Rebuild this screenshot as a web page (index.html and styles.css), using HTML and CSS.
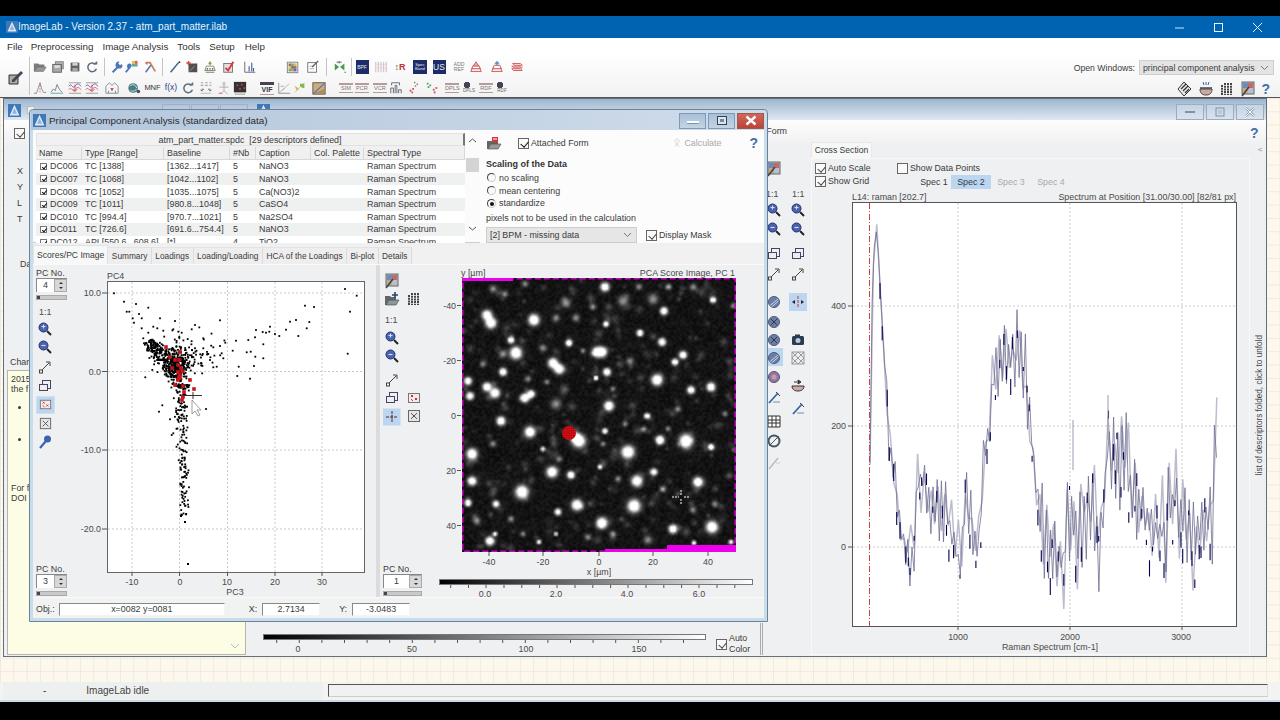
FILE: index.html
```html
<!DOCTYPE html>
<html lang="en">
<head>
<meta charset="utf-8">
<title>ImageLab</title>
<link rel="stylesheet" href="styles.css">
</head>
<body>
<svg class="defs" aria-hidden="true">
  <symbol id="i-logo" viewBox="0 0 16 16"><rect width="16" height="16" fill="#3f78b8"/><path d="M8 1 14 14H2z" fill="#dfeaf5"/><path d="M8 5 11 12H5z" fill="#8fb4da"/></symbol>
  <symbol id="i-folder" viewBox="0 0 16 16"><path d="M1 4h5l1 1h6v3H5l-3 5H1z" fill="#666"/><path d="M5 8h10l-3 5H2z" fill="#888" stroke="#444" stroke-width=".6"/></symbol>
  <symbol id="i-folderadd" viewBox="0 0 16 16"><path d="M1 5h5l1 1h5v3H5l-3 5H1z" fill="#666"/><path d="M5 9h10l-3 5H2z" fill="#899" stroke="#345" stroke-width=".6"/><path d="M11 1v6M8 4h6" stroke="#246" stroke-width="1.6"/></symbol>
  <symbol id="i-folderred" viewBox="0 0 16 16"><path d="M1 6h5l1 1h5v2H5l-3 5H1z" fill="#666"/><path d="M5 9h10l-3 5H2z" fill="#999" stroke="#444" stroke-width=".6"/><rect x="6" y="2" width="6" height="5" fill="#d33"/><path d="M7 4h4" stroke="#fff"/></symbol>
  <symbol id="i-disks" viewBox="0 0 16 16"><rect x="5" y="2" width="9" height="8" fill="#aaa" stroke="#666"/><rect x="2" y="5" width="10" height="9" fill="#999" stroke="#444"/><rect x="4" y="6" width="6" height="3" fill="#ddd"/></symbol>
  <symbol id="i-save" viewBox="0 0 16 16"><rect x="3" y="3" width="10" height="10" fill="#444"/><rect x="5" y="3.5" width="6" height="3" fill="#ccc"/><rect x="5" y="9" width="6" height="4" fill="#999"/></symbol>
  <symbol id="i-refresh" viewBox="0 0 16 16"><path d="M12 5a5 5 0 1 0 1 5" fill="none" stroke="#456" stroke-width="1.7"/><path d="M9 5h5V1z" fill="#456"/></symbol>
  <symbol id="i-wrench" viewBox="0 0 16 16"><path d="M3 14l6-6" stroke="#345fa8" stroke-width="2.2"/><path d="M9 9a3.2 3.2 0 0 1 2-7l-1.5 2 2 2 2-1.5A3.2 3.2 0 0 1 9 9z" fill="#345fa8"/></symbol>
  <symbol id="i-wand" viewBox="0 0 16 16"><path d="M2 14l5-6" stroke="#2e5fb5" stroke-width="2.2"/><path d="M6 10a3 3 0 0 1 1-6l2 2-1 2z" fill="#2e5fb5"/><rect x="9" y="1" width="3.5" height="3.5" fill="#d8b93a"/><rect x="12.5" y="1" width="3" height="3.5" fill="#d44"/><rect x="9" y="4.5" width="3.5" height="3" fill="#4a4"/><rect x="12.5" y="4.5" width="3" height="3" fill="#58c"/></symbol>
  <symbol id="i-xtool" viewBox="0 0 16 16"><path d="M3 3h5l6 10" fill="none" stroke="#c0673a" stroke-width="2"/><path d="M3 14 9 6" stroke="#345fa8" stroke-width="1.8"/><path d="M2 3h3v3z" fill="#c0673a"/></symbol>
  <symbol id="i-pen" viewBox="0 0 16 16"><path d="M3 14 12 3" stroke="#2c4a7a" stroke-width="1.8"/><path d="M12 3l2-1" stroke="#111" stroke-width="1.6"/></symbol>
  <symbol id="i-bbox" viewBox="0 0 16 16"><rect x="4" y="4" width="10" height="10" fill="#333"/><path d="M5 13l6-6" stroke="#888"/><path d="M4 1v5M1.500 3.500h5" stroke="#d22" stroke-width="1.6"/></symbol>
  <symbol id="i-pile" viewBox="0 0 16 16"><path d="M8 1l2 3-2 2-2-2z" fill="#7a8a3a"/><path d="M4 7h8l2 5H2z" fill="#fff" stroke="#4a7a3a"/><circle cx="5" cy="10" r="1" fill="#444"/><circle cx="8" cy="10" r="1" fill="#c33"/><circle cx="11" cy="10" r="1" fill="#444"/><path d="M3 14h10" stroke="#555"/></symbol>
  <symbol id="i-redcheck" viewBox="0 0 16 16"><rect x="2" y="4" width="10" height="10" fill="#ddd" stroke="#555"/><path d="M4 9l3 3 6-10" fill="none" stroke="#d12" stroke-width="2.200"/></symbol>
  <symbol id="i-bars" viewBox="0 0 16 16"><path d="M2 2v12h12" fill="none" stroke="#445"/><path d="M7 13V7M10 13V3M12 13V9" stroke="#2a4a8a" stroke-width="1.300"/></symbol>
  <symbol id="i-mosaic" viewBox="0 0 16 16"><rect x="1.500" y="2.500" width="12" height="12" fill="#eee" stroke="#666"/><path d="M3 4h3v3H3z" fill="#c33"/><path d="M6 4h3v3H6z" fill="#4a4"/><path d="M9 4h3v3H9z" fill="#cb3"/><path d="M3 7h3v3H3z" fill="#cb3"/><path d="M6 7h3v3H6z" fill="#35a"/><path d="M9 7h3v3H9z" fill="#c33"/><path d="M3 10h3v3H3z" fill="#4a4"/><path d="M6 10h3v3H6z" fill="#c73"/><path d="M9 10h3v3H9z" fill="#35a"/></symbol>
  <symbol id="i-checklist" viewBox="0 0 16 16"><rect x="2" y="3" width="10" height="11" fill="#fff" stroke="#555"/><path d="M4 7h5M4 10h5" stroke="#999"/><path d="M7 8l7-7" stroke="#345" stroke-width="1.500"/></symbol>
  <symbol id="i-bowtie" viewBox="0 0 16 16"><path d="M2 4l5 4-5 4zM13 4l-5 4 5 4z" fill="#2f8a2f"/><path d="M7 1v3M4 2.500h6" stroke="#445"/><path d="M13 14h2" stroke="#445"/></symbol>
  <symbol id="i-gridred" viewBox="0 0 16 16"><path d="M2 2v12M5 2v12M8 2v12M11 2v12M14 2v12" stroke="#c9b9c9" stroke-width="1.300"/><path d="M1 5h14M1 9h14" stroke="#dcc" stroke-width=".8"/></symbol>
  <symbol id="i-stack" viewBox="0 0 16 16"><path d="M2 13h12l-2-4H4z" fill="#fff" stroke="#c33" stroke-width="1.100"/><path d="M3 10h10l-2-4H5z" fill="#fff" stroke="#a33" stroke-width="1.100"/><path d="M5 7h6L8 2z" fill="#e9a" stroke="#c33"/></symbol>
  <symbol id="i-stack2" viewBox="0 0 16 16"><path d="M2 13h12l-2-4H4z" fill="#fff" stroke="#c33" stroke-width="1.100"/><path d="M3 10h10l-2-4H5z" fill="#fff" stroke="#a33" stroke-width="1.100"/><path d="M8 1v5M5.500 3.500h5" stroke="#36a" stroke-width="1.300"/></symbol>
  <symbol id="i-stack3" viewBox="0 0 16 16"><path d="M3 4h9l2 2H5zM2 7h10l2 2H4zM2 10h10l2 2H4z" fill="#fbeeee" stroke="#c33" stroke-width="1"/></symbol>
  <symbol id="i-peak" viewBox="0 0 16 16"><path d="M1 14h3l2-6 2-6 2 7 2 4h3" fill="none" stroke="#777"/><path d="M8 2v12" stroke="#c44" stroke-width=".8" stroke-dasharray="2 1"/></symbol>
  <symbol id="i-peak2" viewBox="0 0 16 16"><path d="M1 13l3-4 2 2 2-7 3 6 3 3" fill="none" stroke="#666"/><path d="M1 14h14" stroke="#39a"/></symbol>
  <symbol id="i-wave" viewBox="0 0 16 16"><path d="M1 2h14M1 14h14" stroke="#888"/><path d="M1 6c3-5 4 4 7 0s4-3 7 0" fill="none" stroke="#33a"/><path d="M1 10c3-5 4 4 7 0s4-3 7 0" fill="none" stroke="#c33"/><path d="M8 4v8M5 9l3 3 3-3" fill="none" stroke="#c33"/></symbol>
  <symbol id="i-hist" viewBox="0 0 16 16"><path d="M1 14V6l4-4 3 3 3-3 4 4v8z" fill="none" stroke="#678"/><path d="M6 8h4l-2 4z" fill="#c33"/><path d="M4 14v-3M12 14v-3" stroke="#678"/></symbol>
  <symbol id="i-swirl" viewBox="0 0 16 16"><circle cx="7" cy="8" r="5.500" fill="#2a6a6a"/><path d="M3 6c3-3 7-2 8 2M4 11c2 1 5 1 7-2" fill="none" stroke="#cde" stroke-width="1.100"/><circle cx="13" cy="12" r="2" fill="#234"/></symbol>
  <symbol id="i-gridarrows" viewBox="0 0 16 16"><path d="M2 2h3M7 2h3M12 2h2M2 5h3M7 5h3M12 5h2" stroke="#999" stroke-width="1.300"/><path d="M1 10h5l-2-2v4zM15 10h-5l2-2v4z" fill="#333"/><path d="M2 14h12" stroke="#aaa"/></symbol>
  <symbol id="i-person" viewBox="0 0 16 16"><circle cx="8" cy="3" r="1.500" fill="none" stroke="#999"/><path d="M8 5v6M3 7h10M8 11l-4 4M8 11l4 4" stroke="#999"/><path d="M2 14h4" stroke="#c44"/></symbol>
  <symbol id="i-blackred" viewBox="0 0 16 16"><rect x="1" y="1" width="14" height="12" fill="#111"/><path d="M4 4h2v2H4zM9 3h2v2H9zM7 8h2v2H7zM12 7h2v2h-2z" fill="#c22"/><path d="M2 15h12" stroke="#888"/></symbol>
  <symbol id="i-axisbox" viewBox="0 0 16 16"><path d="M2 2v12h13" fill="none" stroke="#777"/><path d="M2 14 14 3" stroke="#a9a9a9"/><path d="M4 6h4M6 11l3-3" stroke="#999"/></symbol>
  <symbol id="i-arrowpic" viewBox="0 0 16 16"><path d="M2 13 13 2" stroke="#bbb"/><path d="M8 3h5v5h-2L8 6z" fill="#7a3"/><path d="M2 5l5 4-3 2z" fill="#da3"/></symbol>
  <symbol id="i-brownbox" viewBox="0 0 16 16"><rect x="1" y="2" width="14" height="13" fill="#c9a063" stroke="#333"/><path d="M2 14 14 3" stroke="#36a" stroke-width="1.500"/><path d="M3 14 14 9v5z" fill="#a37a3a"/></symbol>
  <symbol id="i-bars2" viewBox="0 0 16 16"><path d="M2 14V8h3v6M7 14V5h2v9M11 14v-4h3v4M3 5V2h9v3" fill="none" stroke="#445"/></symbol>
  <symbol id="i-dots1" viewBox="0 0 16 16"><g fill="#555"><rect x="8" y="1" width="1.500" height="1.500"/><rect x="11" y="3" width="1.500" height="1.500"/><rect x="9" y="5" width="1.500" height="1.500"/></g><g fill="#c33"><rect x="3" y="10" width="2" height="2"/><rect x="6" y="8" width="2" height="2"/><rect x="5" y="12" width="2" height="2"/></g></symbol>
  <symbol id="i-dots2" viewBox="0 0 16 16"><g fill="#2a9a4a"><rect x="2" y="2" width="2" height="2"/><rect x="5" y="4" width="2" height="2"/><rect x="3" y="6" width="2" height="2"/></g><g fill="#c33"><rect x="9" y="9" width="2" height="2"/><rect x="12" y="7" width="2" height="2"/><rect x="10" y="12" width="2" height="2"/></g></symbol>
  <symbol id="i-diamond" viewBox="0 0 16 16"><path d="M7 1l7 7-7 7-6-7z" fill="#eee" stroke="#333"/><path d="M4 8l5-5M6 10l5-5M8 12l4-4" stroke="#333" stroke-width="1.300"/></symbol>
  <symbol id="i-bowl" viewBox="0 0 16 16"><path d="M2 8h12c0 4-2 6-6 6s-6-2-6-6z" fill="#c9a9a0" stroke="#444"/><path d="M2 7h12" stroke="#444" stroke-width="1.500"/><path d="M5 1l1 3M8 1v3M11 1l-1 3" stroke="#36a"/></symbol>
  <symbol id="i-gridcols" viewBox="0 0 16 16"><path d="M3 4v10M6 2v12M9 2v12M12 2v12" stroke="#333" stroke-width="1.800" stroke-dasharray="2 .7"/></symbol>
  <symbol id="i-pal" viewBox="0 0 16 16"><rect x="2" y="1" width="12" height="12" fill="#b9bfcc" stroke="#666"/><path d="M3 2h5v5H3z" fill="#6a8ac0"/><path d="M8 2h5v5H8z" fill="#c66"/><path d="M3 7h5v5H3z" fill="#cca860"/><path d="M2 15 9 6" stroke="#345" stroke-width="1.500"/></symbol>
  <symbol id="i-zin" viewBox="0 0 16 16"><path d="M10 10l4 4" stroke="#222" stroke-width="2"/><circle cx="6.500" cy="6.500" r="4.500" fill="#4a64ac" stroke="#20307a"/><path d="M4.500 5.500h4" stroke="#dde" stroke-width="1.100"/><path d="M6.500 3.500v4" stroke="#dde"/></symbol>
  <symbol id="i-zout" viewBox="0 0 16 16"><path d="M10 10l4 4" stroke="#222" stroke-width="2"/><circle cx="6.500" cy="6.500" r="4.500" fill="#4a64ac" stroke="#20307a"/><path d="M4.500 6.500h4" stroke="#dde" stroke-width="1.100"/></symbol>
  <symbol id="i-expand" viewBox="0 0 16 16"><rect x="2.500" y="11" width="3" height="3" fill="none" stroke="#444"/><path d="M5 11l7-7" stroke="#444"/><path d="M9 3h4v4" fill="none" stroke="#444"/></symbol>
  <symbol id="i-copyrect" viewBox="0 0 16 16"><rect x="5.500" y="2.500" width="8" height="8" fill="none" stroke="#446"/><rect x="2.500" y="6.500" width="8" height="6" fill="#eee" stroke="#446"/></symbol>
  <symbol id="i-boxdots" viewBox="0 0 16 16"><rect x="2.500" y="3.500" width="11" height="9" fill="#f3eaea" stroke="#777"/><path d="M5 5l2 2M7 5 5 7M9 8l2 2M11 8l-2 2M5 9l2 2" stroke="#c33"/></symbol>
  <symbol id="i-boxx" viewBox="0 0 16 16"><rect x="2.500" y="2.500" width="11" height="11" fill="#e6e6e6" stroke="#666"/><path d="M5 5l6 6M11 5l-6 6" stroke="#555"/></symbol>
  <symbol id="i-key" viewBox="0 0 16 16"><path d="M3 14l6-7" stroke="#3a63b0" stroke-width="2.200"/><circle cx="10.500" cy="5" r="3.500" fill="#3a63b0"/></symbol>
  <symbol id="i-cross" viewBox="0 0 16 16"><path d="M8 2v12M2 8h12" stroke="#334" stroke-dasharray="3 1"/><path d="M8 6v4" stroke="#c33"/></symbol>
  <symbol id="i-crossx" viewBox="0 0 16 16"><path d="M8 2v12" stroke="#c33" stroke-dasharray="3 1"/><path d="M2 8l3-2v4zM14 8l-3-2v4z" fill="#223"/></symbol>
  <symbol id="i-target" viewBox="0 0 16 16"><circle cx="8" cy="8" r="5.500" fill="#6a7ea6" stroke="#4a5a80"/><path d="M4 11.500 12 5M5.500 13l7-6" stroke="#c7d4e8"/></symbol>
  <symbol id="i-targetx" viewBox="0 0 16 16"><circle cx="8" cy="8" r="5.500" fill="#6a7ea6" stroke="#4a5a80"/><path d="M5 5l6 6M11 5l-6 6" stroke="#334"/></symbol>
  <symbol id="i-targetr" viewBox="0 0 16 16"><circle cx="8" cy="8" r="5.500" fill="#8a7aa8" stroke="#5a4a78"/><circle cx="8" cy="8" r="2.500" fill="#c99"/></symbol>
  <symbol id="i-cam" viewBox="0 0 16 16"><rect x="2" y="4" width="12" height="9" rx="1.500" fill="#2a3a50"/><rect x="5" y="2.500" width="5" height="2" fill="#2a3a50"/><circle cx="8" cy="8.500" r="2.500" fill="#b9c9d9"/></symbol>
  <symbol id="i-xpal" viewBox="0 0 16 16"><rect x="2" y="2" width="12" height="12" fill="#eee" stroke="#999"/><path d="M2 2l12 12M14 2 2 14M8 2 2 8l6 6 6-6z" fill="none" stroke="#999"/></symbol>
  <symbol id="i-sbowl" viewBox="0 0 16 16"><path d="M2 9h12c0 3-2 5-6 5s-6-2-6-5z" fill="#caa" stroke="#333"/><path d="M4 5h3M8 3l3 2-3 2z" fill="#333" stroke="#333"/></symbol>
  <symbol id="i-tool2" viewBox="0 0 16 16"><path d="M3 14 12 4" stroke="#36a" stroke-width="1.800"/><path d="M7 13h7" stroke="#889"/><path d="M10 3l4 4" stroke="#445"/></symbol>
  <symbol id="i-gridsm" viewBox="0 0 16 16"><path d="M2 3h12v11H2z" fill="#fff" stroke="#333"/><path d="M6 3v11M10 3v11M2 7h12M2 10h12" stroke="#333"/></symbol>
  <symbol id="i-ring" viewBox="0 0 16 16"><circle cx="8" cy="8" r="5.500" fill="none" stroke="#456" stroke-width="2"/><path d="M3 13 13 3" stroke="#456"/></symbol>
  <symbol id="i-fade" viewBox="0 0 16 16"><path d="M3 14 12 3" stroke="#bbb" stroke-width="1.500"/><path d="M10 8h4" stroke="#ccc"/></symbol>
  <symbol id="i-bigedit" viewBox="0 0 16 16"><path d="M1 6h9v9H1z" fill="#aaa" stroke="#333"/><path d="M4 11 13 2l2 2-9 9H4z" fill="#445" /></symbol>
  <symbol id="i-calc" viewBox="0 0 16 16"><path d="M8 1 4 5l4 4-3 5M8 1l4 4-4 4 3 5" fill="none" stroke="#bbb"/></symbol>
</svg>

<div class="screen">
<div class="app">
  <header class="titlebar">
    <svg class="tlogo"><use href="#i-logo"/></svg>
    <span class="ttext">ImageLab - Version 2.37 - atm_part_matter.ilab</span>
    <span class="caps">
      <svg class="capb"><path d="M1 6h9" stroke="#cfe2f3" stroke-width="1"/></svg>
      <svg class="capb"><rect x="1.500" y="1.500" width="8" height="8" fill="none" stroke="#e8f2fa"/></svg>
      <svg class="capb"><path d="M1 1l9 9M10 1l-9 9" stroke="#e8f2fa"/></svg>
    </span>
  </header>
  <nav class="menu"><span>File</span><span>Preprocessing</span><span>Image Analysis</span><span>Tools</span><span>Setup</span><span>Help</span></nav>

  <div class="toolbar">
    <div class="tb-big"><svg class="ic"><use href="#i-bigedit"/></svg></div>
    <i class="tsep tall"></i>
    <div class="tb-rows">
      <div class="tb-row">
        <b class="tool"><svg class="ic"><use href="#i-folder"/></svg></b>
        <b class="tool g4"><svg class="ic"><use href="#i-disks"/></svg></b>
        <b class="tool g3"><svg class="ic"><use href="#i-save"/></svg></b>
        <b class="tool g3"><svg class="ic"><use href="#i-refresh"/></svg></b>
        <i class="tsep g5"></i>
        <b class="tool g5"><svg class="ic"><use href="#i-wrench"/></svg></b>
        <b class="tool"><svg class="ic"><use href="#i-wand"/></svg></b>
        <b class="tool g5"><svg class="ic"><use href="#i-xtool"/></svg></b>
        <i class="tsep g5"></i>
        <b class="tool g5"><svg class="ic"><use href="#i-pen"/></svg></b>
        <b class="tool g3"><svg class="ic"><use href="#i-bbox"/></svg></b>
        <b class="tool g4"><svg class="ic"><use href="#i-pile"/></svg></b>
        <b class="tool g5"><svg class="ic"><use href="#i-redcheck"/></svg></b>
        <b class="tool g7"><svg class="ic"><use href="#i-bars"/></svg></b>
        <b class="tool g29"><svg class="ic"><use href="#i-mosaic"/></svg></b>
        <b class="tool g6"><svg class="ic"><use href="#i-checklist"/></svg></b>
        <i class="tsep g6"></i>
        <b class="tool g6"><svg class="ic"><use href="#i-bowtie"/></svg></b>
        <i class="tsep g4"></i>
        <b class="tool g3"><span class="tag">BPF</span></b>
        <b class="tool g5"><svg class="ic"><use href="#i-gridred"/></svg></b>
        <b class="tool g5"><span class="trr"><em>↕</em>R</span></b>
        <b class="tool g6"><span class="tag two">Spec<br>Band</span></b>
        <b class="tool g5"><span class="tag big">US</span></b>
        <b class="tool g6"><span class="tiny">ADD<br>REF</span></b>
        <b class="tool g3"><svg class="ic"><use href="#i-stack"/></svg></b>
        <b class="tool g7"><svg class="ic"><use href="#i-stack2"/></svg></b>
        <b class="tool g6"><svg class="ic"><use href="#i-stack3"/></svg></b>
      </div>
      <div class="tb-row">
        <b class="tool"><svg class="ic"><use href="#i-peak"/></svg></b>
        <b class="tool g3"><svg class="ic"><use href="#i-peak2"/></svg></b>
        <b class="tool g4"><svg class="ic"><use href="#i-wave"/></svg></b>
        <b class="tool g3"><svg class="ic"><use href="#i-wave"/></svg></b>
        <b class="tool g6"><svg class="ic"><use href="#i-hist"/></svg></b>
        <b class="tool g8"><svg class="ic"><use href="#i-swirl"/></svg></b>
        <b class="mnf g2">MNF</b>
        <b class="tool g2"><span class="fx">f(x)</span></b>
        <b class="tool g3"><svg class="ic"><use href="#i-refresh"/></svg></b>
        <b class="tool g4"><svg class="ic"><use href="#i-gridarrows"/></svg></b>
        <b class="tool g4"><svg class="ic"><use href="#i-person"/></svg></b>
        <b class="tool g2"><svg class="ic"><use href="#i-blackred"/></svg></b>
        <b class="tool g13"><span class="ruled bold">VIF</span></b>
        <b class="tool g3"><svg class="ic"><use href="#i-axisbox"/></svg></b>
        <b class="tool g2"><svg class="ic"><use href="#i-arrowpic"/></svg></b>
        <b class="tool g5"><svg class="ic"><use href="#i-brownbox"/></svg></b>
        <b class="tool g13"><span class="ruled">SIM</span></b>
        <b class="tool g2"><span class="ruled">PCR</span></b>
        <b class="tool g4"><span class="ruled">VCR</span></b>
        <b class="tool g2"><svg class="ic"><use href="#i-bars2"/></svg></b>
        <b class="tool g4"><svg class="ic"><use href="#i-dots1"/></svg></b>
        <b class="tool g4"><svg class="ic"><use href="#i-dots2"/></svg></b>
        <b class="tool g6"><span class="ruled">DPLS</span></b>
        <b class="tool g3"><span class="ball">DPLS</span></b>
        <b class="tool g3"><span class="ruled">RDF</span></b>
        <b class="tool g2"><span class="ball">RDF</span></b>
      </div>
    </div>
    <div class="tb-right">
      <div class="owin"><label>Open Windows:</label><span class="owin-box">principal component analysis<svg class="chev"><path d="M1 1l3.500 3.500L8 1" fill="none" stroke="#777"/></svg></span></div>
      <div class="tb-icons">
        <svg class="ic"><use href="#i-diamond"/></svg>
        <svg class="ic"><use href="#i-bowl"/></svg>
        <svg class="ic"><use href="#i-gridcols"/></svg>
        <svg class="ic"><use href="#i-pal"/></svg>
        <span class="help sm">?</span>
      </div>
    </div>
  </div>

  <main class="desk">
    <section class="child">
      <div class="child-title">
        <svg class="ic logo1"><use href="#i-logo"/></svg>
        <span class="ghost-check"></span>
        <span class="ghost-btns"><i></i><i></i><i></i></span>
        <svg class="ic logo2"><use href="#i-logo"/></svg>
        <span class="child-btns">
          <i class="cbtn"><svg width="12" height="10"><path d="M1 5h10" stroke="#7f93a8" stroke-width="2"/></svg></i>
          <i class="cbtn"><svg width="12" height="10"><rect x="2" y="1" width="8" height="8" fill="none" stroke="#7f93a8"/><rect x="4" y="3" width="4" height="4" fill="#b9c9d8"/></svg></i>
          <i class="cbtn"><svg width="12" height="10"><path d="M2 1l8 8M10 1l-8 8" stroke="#8ba0b5" stroke-width="2.400"/><path d="M2 1l8 8M10 1l-8 8" stroke="#fff" stroke-width="1"/></svg></i>
        </span>
      </div>
      <div class="child-body">
        <div class="pane-left">
          <div class="pl-check"><span class="cb on"></span></div>
          <ul class="pl-fields"><li>X</li><li>Y</li><li>L</li><li>T</li></ul>
          <div class="pl-da">Da</div>
          <div class="pl-chan">Chan</div>
          <div class="notes">
            <p>2015<br>the f</p>
            <ul><li>&nbsp;</li><li>&nbsp;</li></ul>
            <p class="for">For f<br>DOI</p>
            <svg class="notes-chev" width="10" height="6"><path d="M1 1l4 4 4-4" fill="none" stroke="#bbb"/></svg>
          </div>
        </div>
        <div class="pane-mid">
          <div class="mid-top"><span>Form</span></div>
          <div class="mid-main">
            <svg class="strip-mid" width="48" height="320">
              <g transform="translate(-763,-160)">
                <rect x="766" y="348" width="18" height="18" fill="#bcd6ef"/>
                <rect x="790" y="293" width="18" height="18" fill="#bcd6ef"/>
                <use href="#i-pal" x="767" y="161" width="16" height="16"/>
                <text class="ax" x="767" y="197">1:1</text><text class="ax" x="793" y="197">1:1</text>
                <use href="#i-zin" x="767" y="202" width="16" height="16"/><use href="#i-zin" x="791" y="202" width="16" height="16"/>
                <use href="#i-zout" x="767" y="221" width="16" height="16"/><use href="#i-zout" x="791" y="221" width="16" height="16"/>
                <use href="#i-copyrect" x="767" y="246" width="16" height="16"/><use href="#i-copyrect" x="791" y="246" width="16" height="16"/>
                <use href="#i-expand" x="767" y="266" width="16" height="16"/><use href="#i-expand" x="791" y="266" width="16" height="16"/>
                <use href="#i-target" x="767" y="294" width="16" height="16"/><use href="#i-crossx" x="791" y="294" width="16" height="16"/>
                <use href="#i-targetx" x="767" y="314" width="16" height="16"/>
                <use href="#i-targetx" x="767" y="332" width="16" height="16"/><use href="#i-cam" x="791" y="332" width="16" height="16"/>
                <use href="#i-target" x="767" y="350" width="16" height="16"/><use href="#i-xpal" x="791" y="350" width="16" height="16"/>
                <use href="#i-targetr" x="767" y="369" width="16" height="16"/><use href="#i-sbowl" x="791" y="377" width="16" height="16"/>
                <use href="#i-tool2" x="767" y="389" width="16" height="16"/><use href="#i-tool2" x="791" y="400" width="16" height="16"/>
                <use href="#i-gridsm" x="767" y="413" width="16" height="16"/>
                <use href="#i-ring" x="767" y="433" width="16" height="16"/>
                <use href="#i-fade" x="767" y="455" width="16" height="16"/>
              </g>
            </svg>
          </div>
          <div class="mid-bottom">
            <svg class="cbar2" width="464" height="33">
              <defs><linearGradient id="gradk"><stop offset="0" stop-color="#000"/><stop offset="1" stop-color="#fff"/></linearGradient></defs>
              <g transform="translate(-250,-622)">
                <rect x="263.500" y="633.500" width="442" height="5" fill="url(#gradk)" stroke="#777"/>
                <path d="M276.700 639v3M299.300 639v3M321.900 639v3M344.500 639v3M367.100 639v3M389.700 639v3M412.300 639v3M434.900 639v3M457.500 639v3M480.100 639v3M502.700 639v3M525.300 639v3M547.900 639v3M570.500 639v3M593.100 639v3M615.700 639v3M638.300 639v3M660.900 639v3M683.500 639v3" stroke="#555"/>
                <text class="ax m" x="298" y="651">0</text><text class="ax m" x="412" y="651">50</text><text class="ax m" x="526" y="651">100</text><text class="ax m" x="639" y="651">150</text>
              </g>
            </svg>
            <div class="autocolor"><span class="cb on"></span><span>Auto<br>Color</span></div>
            <i class="dbl"></i>
          </div>
        </div>
        <div class="pane-cs">
          <div class="cs-tab">Cross Section</div>
          <div class="cs-panel">
            <div class="cs-controls">
              <div class="cs-col1">
                <label class="chk"><span class="cb on"></span>Auto Scale</label>
                <label class="chk"><span class="cb on"></span>Show Grid</label>
              </div>
              <div class="cs-col2">
                <label class="chk"><span class="cb"></span>Show Data Points</label>
                <div class="specs"><span>Spec 1</span><span class="act">Spec 2</span><span class="dis">Spec 3</span><span class="dis">Spec 4</span></div>
              </div>
            </div>
            <svg class="spec-plot" width="437" height="465">
              <g transform="translate(-812,-190)">
                <text class="ax" x="852" y="200">L14: raman [202.7]</text>
                <text class="ax e" x="1236" y="200">Spectrum at Position [31.00/30.00] [82/81 px]</text>
                <rect x="852.500" y="202.500" width="384" height="424" fill="#fff"/>
                <path class="grid" d="M853 306H1236M853 426H1236M853 547H1236M958 203V626M1070 203V626M1182 203V626"/>
                <g id="spectrum"></g>
                <path d="M869.500 203V626" stroke="#c44" stroke-dasharray="6 2 1 2" fill="none"/>
                <rect x="852.500" y="202.500" width="384" height="424" fill="none" stroke="#555"/>
                <path d="M848 306h4M848 426h4M848 547h4M958 627v3M1070 627v3M1182 627v3" stroke="#555"/>
                <text class="ax e" x="846" y="309">400</text><text class="ax e" x="846" y="429">200</text><text class="ax e" x="846" y="550">0</text>
                <text class="ax m" x="958" y="640">1000</text><text class="ax m" x="1070" y="640">2000</text><text class="ax m" x="1181" y="640">3000</text>
                <text class="ax m" x="1050" y="650">Raman Spectrum [cm-1]</text>
              </g>
            </svg>
          </div>
        </div>
        <div class="pane-fold">
          <span class="help">?</span>
          <span class="lt">&lt;</span>
          <span class="vert">list of descriptors folded, click to unfold</span>
        </div>
      </div>
    </section>

    <section class="dlg">
      <div class="dlg-title">
        <svg class="dlogo"><use href="#i-logo"/></svg>
        <span class="dlg-ttl">Principal Component Analysis (standardized data)</span>
        <span class="dlg-btns">
          <i class="wbtn"><svg width="14" height="8"><path d="M1 5h12" stroke="#fff" stroke-width="2"/><path d="M1 6.500h12" stroke="#7d95ad"/></svg></i>
          <i class="wbtn"><svg width="12" height="11"><rect x="1.500" y="1.500" width="9" height="8" fill="#dbe6f0" stroke="#345"/><rect x="4" y="4" width="4" height="3" fill="#789"/></svg></i>
          <i class="wbtn close"><svg width="14" height="11"><path d="M2.500 1.500l9 8M11.500 1.500l-9 8" stroke="#fff" stroke-width="2.400"/></svg></i>
        </span>
      </div>
      <div class="dlg-top">
        <div class="dtable">
          <div class="dtable-grid">
            <div class="dt-head">atm_part_matter.spdc&nbsp; [29 descriptors defined]</div>
            <div class="dt-row dt-cols"><span>Name</span><span>Type [Range]</span><span>Baseline</span><span>#Nb</span><span>Caption</span><span>Col. Palette</span><span>Spectral Type</span></div>
            <div class="dt-row"><span><i class="mini"></i>DC006</span><span>TC [1388]</span><span>[1362...1417]</span><span>5</span><span>NaNO3</span><span></span><span>Raman Spectrum</span></div>
            <div class="dt-row alt"><span><i class="mini"></i>DC007</span><span>TC [1068]</span><span>[1042...1102]</span><span>5</span><span>NaNO3</span><span></span><span>Raman Spectrum</span></div>
            <div class="dt-row"><span><i class="mini"></i>DC008</span><span>TC [1052]</span><span>[1035...1075]</span><span>5</span><span>Ca(NO3)2</span><span></span><span>Raman Spectrum</span></div>
            <div class="dt-row alt"><span><i class="mini"></i>DC009</span><span>TC [1011]</span><span>[980.8...1048]</span><span>5</span><span>CaSO4</span><span></span><span>Raman Spectrum</span></div>
            <div class="dt-row"><span><i class="mini"></i>DC010</span><span>TC [994.4]</span><span>[970.7...1021]</span><span>5</span><span>Na2SO4</span><span></span><span>Raman Spectrum</span></div>
            <div class="dt-row alt"><span><i class="mini"></i>DC011</span><span>TC [726.6]</span><span>[691.6...754.4]</span><span>5</span><span>NaNO3</span><span></span><span>Raman Spectrum</span></div>
            <div class="dt-row"><span><i class="mini"></i>DC012</span><span>API [550.6...608.6]</span><span>[*]</span><span>4</span><span>TiO2</span><span></span><span>Raman Spectrum</span></div>
          </div>
          <div class="dscroll">
            <svg class="sc-up" width="9" height="5"><path d="M1 4l3.500-3L8 4" fill="none" stroke="#555"/></svg>
            <i class="sc-thumb"></i>
            <svg class="sc-dn" width="9" height="5"><path d="M1 1l3.500 3L8 1" fill="none" stroke="#555"/></svg>
          </div>
        </div>
        <div class="dopts">
          <div class="do-row1">
            <svg class="ic"><use href="#i-folderred"/></svg>
            <label class="chk att"><span class="cb on blk"></span>Attached Form</label>
            <span class="calc"><svg class="ic sm"><use href="#i-calc"/></svg>Calculate</span>
            <span class="help">?</span>
          </div>
          <div class="do-h">Scaling of the Data</div>
          <label class="rad"><span class="rd"></span>no scaling</label>
          <label class="rad"><span class="rd"></span>mean centering</label>
          <label class="rad"><span class="rd on"></span>standardize</label>
          <div class="do-note">pixels not to be used in the calculation</div>
          <div class="do-row2">
            <span class="combo">[2] BPM - missing data<svg class="chev"><path d="M1 1l3.500 3.500L8 1" fill="none" stroke="#777"/></svg></span>
            <label class="chk"><span class="cb on"></span>Display Mask</label>
          </div>
        </div>
      </div>
      <div class="tabs"><span class="tab act">Scores/PC Image</span><span class="tab">Summary</span><span class="tab">Loadings</span><span class="tab">Loading/Loading</span><span class="tab">HCA of the Loadings</span><span class="tab">Bi-plot</span><span class="tab">Details</span></div>
      <div class="tabbody">
        <div class="tb-left">
          <div class="pc-col">
            <div class="pc-lbl">PC No.</div>
            <div class="spin"><span class="sv">4</span><span class="sb"><i class="up"></i><i class="dn"></i></span></div>
            <div class="slide"><i></i></div>
            <svg class="strip1" width="44" height="150"><g transform="translate(-36,-306)">
              <rect x="36.500" y="398.500" width="18" height="17" fill="#bcd6ef" stroke="#cfe0f0"/>
              <text class="ax" x="39" y="317">1:1</text>
              <use href="#i-zin" x="37" y="323" width="16" height="16"/>
              <use href="#i-zout" x="37" y="341" width="16" height="16"/>
              <use href="#i-expand" x="37" y="361" width="16" height="16"/>
              <use href="#i-copyrect" x="37" y="380" width="16" height="16"/>
              <use href="#i-boxdots" x="38" y="399" width="15" height="15"/>
              <use href="#i-boxx" x="38" y="418" width="15" height="15"/>
              <use href="#i-key" x="37" y="436" width="16" height="16"/>
            </g></svg>
            <div class="pc-lbl bottom">PC No.</div>
            <div class="spin"><span class="sv">3</span><span class="sb"><i class="up"></i><i class="dn"></i></span></div>
            <div class="slide"><i></i></div>
          </div>
          <svg class="plot1" width="296" height="333"><g transform="translate(-80,-265)">
            <text class="ax" x="107" y="279">PC4</text>
            <rect x="107.500" y="281.500" width="257" height="291" fill="#fff" stroke="#666"/>
            <path class="grid" d="M108 293H364M108 371.500H364M108 450H364M108 529H364M132 282V572M179.500 282V572M227.500 282V572M275 282V572M322 282V572"/>
            <g id="scatter"></g>
            <path d="M102 293h5M102 371.500h5M102 450h5M102 529h5M132 572v4M179.500 572v4M227.500 572v4M275 572v4M322 572v4" stroke="#555"/>
            <text class="ax e" x="101" y="296">10.0</text><text class="ax e" x="101" y="374.500">0.0</text><text class="ax e" x="101" y="453">-10.0</text><text class="ax e" x="101" y="532">-20.0</text>
            <text class="ax m" x="132" y="585">-10</text><text class="ax m" x="180" y="585">0</text><text class="ax m" x="227" y="585">10</text><text class="ax m" x="275" y="585">20</text><text class="ax m" x="322" y="585">30</text>
            <text class="ax m" x="235" y="595">PC3</text>
          </g></svg>
        </div>
        <i class="vsplit"></i>
        <div class="tb-right-pane">
          <div class="pc-col wide">
            <svg class="strip2" width="51" height="160"><g transform="translate(-383,-272)">
              <rect x="382.500" y="408.500" width="18" height="17" fill="#bcd6ef"/>
              <use href="#i-pal" x="384" y="273" width="16" height="16"/>
              <use href="#i-folderadd" x="384" y="291" width="16" height="16"/>
              <use href="#i-gridcols" x="406" y="291" width="16" height="16"/>
              <text class="ax" x="385" y="323">1:1</text>
              <use href="#i-zin" x="384" y="330" width="16" height="16"/>
              <use href="#i-zout" x="384" y="348" width="16" height="16"/>
              <use href="#i-expand" x="384" y="372" width="16" height="16"/>
              <use href="#i-copyrect" x="384" y="390" width="16" height="16"/>
              <use href="#i-boxdots" x="406" y="390" width="16" height="16"/>
              <use href="#i-cross" x="384" y="409" width="16" height="16"/>
              <use href="#i-boxx" x="406" y="408" width="16" height="16"/>
            </g></svg>
            <div class="pc-lbl bottom">PC No.</div>
            <div class="spin long"><span class="sv">1</span><span class="sb"><i class="up"></i><i class="dn"></i></span></div>
            <div class="slide long"><i></i></div>
          </div>
          <div class="imgplot">
            <svg class="plot2" width="327" height="333"><g transform="translate(-437,-265)">
              <text class="ax" x="461" y="276">y [µm]</text>
              <text class="ax e" x="735" y="276">PCA Score Image, PC 1</text>
              <path d="M457 305.500h4M457 360.500h4M457 415.500h4M457 470.500h4M457 525.500h4M489 552v4M543 552v4M599 552v4M653 552v4M708 552v4" stroke="#555"/>
              <text class="ax e" x="456" y="309">-40</text><text class="ax e" x="456" y="364">-20</text><text class="ax e" x="456" y="419">0</text><text class="ax e" x="456" y="474">20</text><text class="ax e" x="456" y="529">40</text>
              <text class="ax m" x="489" y="565">-40</text><text class="ax m" x="543" y="565">-20</text><text class="ax m" x="599" y="565">0</text><text class="ax m" x="653" y="565">20</text><text class="ax m" x="708" y="565">40</text>
              <text class="ax m" x="599" y="575">x [µm]</text>
              <rect x="439.500" y="579.500" width="313" height="5" fill="url(#gradk)" stroke="#777"/>
              <path d="M450.700 585v3M468.500 585v3M486 585v3M504 585v3M521.800 585v3M539.600 585v3M557 585v3M575 585v3M592.800 585v3M610.600 585v3M628 585v3M646 585v3M663.800 585v3M681.600 585v3M699 585v3M717 585v3M734.800 585v3" stroke="#555"/>
              <text class="ax m" x="485" y="597">0.0</text><text class="ax m" x="556" y="597">2.0</text><text class="ax m" x="627" y="597">4.0</text><text class="ax m" x="699" y="597">6.0</text>
            </g></svg>
            <canvas id="pcimg" class="pcimg" width="274" height="274"></canvas>
          </div>
        </div>
      </div>
      <div class="dlg-status">
        <span class="st-l">Obj.:</span><span class="st-box obj">x=0082 y=0081</span>
        <span class="st-l x">X:</span><span class="st-box num">2.7134</span>
        <span class="st-l y">Y:</span><span class="st-box num">-3.0483</span>
      </div>
    </section>
  </main>

  <footer class="status">
    <div class="st-cell"><span class="st-dash">-</span><span class="st-msg">ImageLab idle</span></div>
    <div class="st-prog"><i></i></div>
  </footer>
</div>
</div>
<script src="charts.js"></script>
</body>
</html>
```
FILE: styles.css
```css
*{box-sizing:border-box}
html,body{margin:0;height:100%;background:#000;overflow:hidden}
body{font:8.9px/1.15 "Liberation Sans",Arial,sans-serif;color:#3a3a3a}
.defs{position:absolute;width:0;height:0}
.screen{width:1280px;height:720px;padding:16px 0 18px;background:#000}
.app{height:686px;display:flex;flex-direction:column;background:#f3f4f4;filter:blur(.3px)}
.ic{width:16px;height:16px;flex:none;display:block}
.ax{font:8.9px "Liberation Sans",Arial,sans-serif;fill:#4a4a4a}
.ax.e{text-anchor:end}
.ax.m{text-anchor:middle}
.grid{stroke:#c9c9c9;stroke-dasharray:2 2;fill:none}
.help{color:#3f70ab;font:bold 14px "Liberation Sans",Arial,sans-serif}
.help.sm{font-size:14px}

/* title + menu */
.titlebar{height:22px;background:#0063b1;color:#e9f2fa;display:flex;align-items:center;padding-left:6px;flex:none}
.tlogo{width:12px;height:12px;margin-right:0}
.ttext{font-size:10px}
.caps{margin-left:auto;display:flex;gap:28px;margin-right:17px}
.capb{width:11px;height:11px}
.menu{height:15px;background:#fff;display:flex;align-items:center;padding:2px 0 0 7px;font-size:9.8px;color:#333;flex:none}
.menu span:nth-child(2){margin-left:8px}
.menu span:nth-child(3){margin-left:9px}
.menu span:nth-child(4){margin-left:9px}
.menu span:nth-child(5){margin-left:9px}
.menu span:nth-child(6){margin-left:10px}

/* toolbar */
.toolbar{height:45px;flex:none;display:flex;background:linear-gradient(#fff,#f2f2f2);border-bottom:1px solid #555}
.tb-big{width:29px;display:flex;align-items:flex-end;justify-content:center;padding:0 0 12px 3px}
.tsep{width:1px;flex:none;background:#c4c4c4;height:18px;display:block}
.tsep.tall{height:38px;margin-top:4px}
.tb-rows{display:flex;flex-direction:column;padding:5px 0 0 3px;gap:3px}
.tb-row{display:flex;align-items:center;height:18px}
.tool{width:14px;height:16px;display:flex;align-items:center;justify-content:center;flex:none;font-weight:normal}
.tool .ic{width:14px;height:14px;opacity:.85}
.g2{margin-left:2px}.g3{margin-left:3px}.g4{margin-left:4px}.g5{margin-left:5px}.g6{margin-left:6px}.g7{margin-left:7px}.g8{margin-left:8px}.g13{margin-left:13px}.g29{margin-left:29px}
.tag{flex:none;width:13px;height:14px;background:#1d2b68;color:#e8ecf8;font-size:5px;display:flex;align-items:center;justify-content:center;text-align:center;line-height:1}
.tag.two{font-size:4.2px;width:14px}
.tag.big{font-size:8.5px}
.tiny{font-size:5.2px;line-height:1;color:#777;text-align:center;flex:none}
.trr{color:#b33;font-size:9px;flex:none;font-weight:bold}
.trr em{color:#36a;font-style:normal}
.mnf{font-size:7.5px;font-weight:normal;color:#333;width:19px;text-align:center}
.fx{font-size:8.5px;color:#2a4a8a;flex:none}
.ruled{flex:none;font-size:5.6px;color:#777;border-top:2px solid #b99;border-bottom:1px solid #b99;padding:1px 0;line-height:1;text-align:center;width:14px}
.ruled.bold{font-size:7px;font-weight:bold;color:#334;border-top:3px solid #445}
.ball{flex:none;font-size:4.6px;line-height:1;color:#666;text-align:center;padding-top:7px;width:14px;background:radial-gradient(circle at 5px 3px,#445 3px,transparent 3.5px)}
.tb-right{margin-left:auto;display:flex;flex-direction:column;align-items:flex-end;padding:7px 6px 0 0}
.owin{display:flex;align-items:center;gap:4px;font-size:8.7px}
.owin-box{width:135px;height:15px;background:#e4e4e4;border:1px solid #cfcfcf;display:flex;align-items:center;justify-content:space-between;padding:0 4px 0 3px}
.chev{width:9px;height:6px;flex:none}
.tb-icons{display:flex;align-items:center;gap:5px;margin-top:5px;padding-right:4px;height:17px}

/* desk */
.desk{flex:1;position:relative;overflow:hidden;background-color:#fdf8ee;background-image:linear-gradient(#f1ead9 1px,transparent 1px),linear-gradient(90deg,#f1ead9 1px,transparent 1px);background-size:13.33px 13.33px}
.child{position:absolute;left:3px;top:0;width:1264px;height:559px;border:1px solid #5f6f7f;background:#eff0f1;display:flex;flex-direction:column}
.child-title{height:21px;flex:none;background:linear-gradient(#9eb6cf,#dfe8f1);display:flex;align-items:flex-start;padding-top:5px}
.logo1{margin-left:4px;width:13px;height:13px}
.ghost-check{width:8px;height:8px;border:1px solid #bbb;margin-left:6px;margin-top:2px;background:#eee}
.ghost-btns{display:flex;gap:1px;margin-left:127px}
.ghost-btns i{width:28px;height:14px;border:1px solid #9fb2c5;display:block}
.logo2{margin-left:9px;width:13px;height:13px}
.child-btns{margin-left:auto;display:flex;gap:2px;margin-right:2px}
.cbtn{width:28px;height:16px;background:linear-gradient(#c5d4e3,#d9e3ed);border:1px solid #98adc1;display:flex;align-items:center;justify-content:center}
.child-body{flex:1;display:flex;min-height:0;background:linear-gradient(#fdfdfd,#eff0f1 26px)}
.pane-left{width:242px;padding-left:3px;flex:none;display:flex;flex-direction:column}
.pl-check{height:13px;margin:8px 0 0 7px}
.pl-fields{list-style:none;margin:23px 0 0 10px;padding:0;font-size:9px}
.pl-fields li{height:16px;line-height:14px}
.pl-da{margin:31px 0 0 13px}
.pl-chan{margin:88px 0 0 3px}
.notes{flex:1;margin-top:3px;background:#fdfde6;border:1px solid #b5b5ac;position:relative;padding:3px 3px;display:flex;flex-direction:column;line-height:10px;margin-bottom:1px}
.notes p{margin:0}
.notes ul{margin:8px 0 0;padding:0 0 0 19px;list-style:disc}
.notes li{height:32px;font-size:9px;line-height:10px}
.notes .for{margin-top:17px}
.notes-chev{position:absolute;right:5px;bottom:5px}
.pane-mid{width:560px;flex:none;display:flex;flex-direction:column;margin-left:4px}
.mid-top{height:22px;display:flex;justify-content:flex-end;align-items:center;padding-right:23px}
.mid-main{flex:1;display:flex;justify-content:flex-end;padding-top:18px;min-height:0}
.strip-mid{flex:none}
.mid-bottom{height:33px;display:flex;align-items:flex-start}
.cbar2{flex:none}
.autocolor{display:flex;align-items:center;gap:2px;margin:10px 0 0 2px;line-height:11px;width:44px}
.dbl{width:3px;height:32px;border-left:1px solid #aaa;border-right:1px solid #aaa}
.pane-cs{width:439px;flex:none;margin-left:1px;display:flex;flex-direction:column;padding-top:22px;padding-bottom:1px}
.cs-tab{width:61px;height:16px;background:#f6f7f7;display:flex;align-items:center;justify-content:center;border:1px solid #e8e8e8;border-bottom:0;font-size:8.6px}
.cs-panel{flex:1;min-height:0;background:#eff0f1;border:1px solid #f9f9f9;display:flex;flex-direction:column}
.cs-controls{height:31px;flex:none;display:flex;padding:4px 0 0 3px}
.cs-col1{width:82px;display:flex;flex-direction:column;gap:2px}
.cs-col2{display:flex;flex-direction:column;gap:1px;flex:1}
.chk{display:flex;align-items:center;gap:2px;height:11px;font-size:8.8px;line-height:1}
.cb{width:11px;height:11px;flex:none;display:inline-block;background:#fafafa;border:1px solid #666;position:relative}
.cb.on::after{content:"";position:absolute;left:3px;top:1px;width:4px;height:6px;border:solid #444;border-width:0 1px 1px 0;transform:rotate(40deg)}
.cb.blk::after{border-color:#111;border-width:0 1.5px 1.5px 0}
.specs{display:flex;align-items:center;height:14px;margin-left:20px}
.specs span{width:40px;text-align:center;line-height:14px}
.specs span:first-child{width:34px}
.specs .act{background:#bcd6ef;color:#2a3a4a}
.specs .dis{color:#aaa}
.spec-plot{flex:none;display:block}
.pane-fold{flex:1;display:flex;flex-direction:column;align-items:center;padding-top:5px}
.pane-fold .help{margin-right:12px}
.pane-fold .lt{font-size:8px;margin-top:4px;color:#888}
.vert{writing-mode:vertical-rl;transform:rotate(180deg);margin-top:181px;font-size:8.2px;white-space:nowrap;color:#444;line-height:1}

/* dialog */
.dlg{position:absolute;left:29px;top:11px;width:739px;height:513px;background:#eff0f1;border:1px solid #6c8298;border-radius:4px 4px 0 0;box-shadow:inset 0 0 0 3px #c8dceb;display:flex;flex-direction:column;padding:0 3px 3px}
.dlg-title{height:20px;flex:none;margin:0 -2px;display:flex;align-items:center;padding:1px 2px 0 2px;background:linear-gradient(90deg,#b3c6dc,#cfdcea);border-radius:3px 3px 0 0}
.dlogo{width:13px;height:13px;margin-right:3px}
.dlg-ttl{font-size:9.9px;color:#2a2a2a}
.dlg-btns{margin-left:auto;display:flex;gap:2px}
.wbtn{width:27px;height:16px;background:linear-gradient(#a9c0d8,#c3d4e4);border:1px solid #7f9ab5;display:flex;align-items:center;justify-content:center}
.wbtn.close{background:linear-gradient(#d3655a,#b9453a);border-color:#9a5a50}
.dlg-top{height:113px;flex:none;display:flex;background:#fbfbfb}
.dtable{width:447px;padding-left:3px;display:flex;padding-top:3px;border-bottom:1px solid #ccc;flex:none}
.dtable-grid{width:429px;height:110px;overflow:hidden;flex:none;background:#fff}
.dt-head{height:13px;background:#f1f1f1;text-align:center;line-height:13px;border:1px solid #e2e2e2;border-right:2px solid #777}
.dt-row{display:grid;grid-template-columns:46px 82px 66px 26px 55px 53px 101px;height:12.67px;align-items:center;background:#fff}
.dt-row span{padding-left:3px;white-space:nowrap;display:flex;align-items:center;min-width:0}
.dt-row.alt{background:#eff0f0}
.dt-cols{height:14px;background:#f0f0f0;border-bottom:1px solid #d8d8d8;padding-top:1px}
.dt-cols span{border-right:1px solid #d8d8d8;height:13px}
.mini{width:7px;height:7px;border:1px solid #777;background:#fff;display:block;margin-right:3px;margin-left:1px;flex:none;position:relative}
.mini::after{content:"";position:absolute;left:1.500px;top:0;width:2px;height:4px;border:solid #111;border-width:0 1px 1px 0;transform:rotate(40deg)}
.dscroll{width:15px;flex:none;display:flex;flex-direction:column;align-items:center;padding-top:5px}
.sc-thumb{width:13px;height:14px;background:#d4d4d4;display:block;margin-top:15px}
.sc-dn{margin-top:54px}
.dopts{flex:1;padding:5px 0 0 6px;display:flex;flex-direction:column;min-width:0;background:#fcfcfc}
.do-row1{height:16px;display:flex;align-items:center}
.att{margin-left:16px}
.calc{margin-left:auto;display:flex;align-items:center;color:#a9a9a9;gap:2px}
.calc .sm{width:10px;height:12px}
.do-row1 .help{margin:0 6px 0 28px}
.do-h{font-weight:bold;margin-top:8px;height:11px;font-size:9px;color:#333}
.rad{display:flex;align-items:center;gap:3px;height:13.500px;margin-left:1px}
.do-h + .rad{margin-top:2px}
.rd{width:9px;height:9px;border-radius:50%;border:1px solid #666;border-color:#444 #ccc #ccc #444;background:#fafafa;flex:none;display:block;position:relative}
.rd.on::after{content:"";position:absolute;left:1.500px;top:1.500px;width:4px;height:4px;border-radius:50%;background:#111}
.do-note{margin-top:3px;height:10px;line-height:10px}
.do-row2{display:flex;align-items:center;margin-top:4px;height:16px}
.combo{width:151px;height:16px;background:#e6e6e6;border:1px solid #cdcdcd;display:flex;justify-content:space-between;align-items:center;padding:0 4px 0 3px}
.do-row2 .chk{margin-left:9px}

.tabs{height:18px;flex:none;display:flex;align-items:flex-end;background:#f1f1f1;margin-top:3px}
.tab{height:17px;line-height:16px;padding:0 3.500px;border-right:1px solid #dcdcdc;white-space:nowrap;background:#eeeeee;border-top:1px solid #e3e3e3;font-size:8.3px}
.tab.act{height:19px;background:#f7f8f8;line-height:18px;padding:0 3px 0 3px;border:1px solid #e2e2e2;border-bottom:0;font-size:8.6px}
.tabbody{height:333px;flex:none;display:flex;background:#eff0f1;border-top:1px solid #fafafa}
.tb-left{width:343px;flex:none;display:flex}
.pc-col{width:47px;flex:none;padding:3px 0 1px 3px;display:flex;flex-direction:column}
.pc-lbl{height:10px;line-height:11px}
.pc-lbl.bottom{margin-top:auto}
.spin{width:31px;height:14px;display:flex;border:1px solid #888;border-right:0;border-bottom:0;background:#fff}
.sv{flex:1;text-align:center;line-height:13px}
.sb{width:13px;background:#d8d8d8;border:1px solid #aaa;display:flex;flex-direction:column;align-items:center;justify-content:space-around;padding:1px 0}
.sb i{display:block;width:0;height:0;border:2.500px solid transparent;border-top:0;border-bottom:2.500px solid #333}
.sb i.dn{border-bottom:0;border-top:2.500px solid #333}
.slide{width:31px;height:5px;background:#c9c9c9;border:1px solid #aaa;margin-top:3px}
.slide i{display:block;width:3px;height:3px;background:#445}
.spin.long,.slide.long{width:39px}
.strip1{margin-top:4px;display:block;flex:none}
.plot1{flex:none;display:block}
.vsplit{width:4px;flex:none;background:#dcdcdc;display:block}
.tb-right-pane{flex:1;display:flex;min-width:0}
.pc-col.wide{width:57px}
.strip2{display:block;flex:none;margin-top:4px}
.imgplot{flex:1;position:relative}
.plot2{display:block}
.pcimg{position:absolute;left:25px;top:13px;width:274px;height:274px;display:block}

.dlg-status{flex:1;display:flex;align-items:center;background:#f1f2f2;border-top:1px solid #fafafa;padding:3px 0 0 3px}
.st-box{height:13px;background:#fff;border:1px solid #f4f4f4;border-left:1px solid #888;border-top:1px solid #888;text-align:center;line-height:11px}
.st-box.obj{width:166px;margin-left:4px}
.st-box.num{width:58px;margin-left:5px}
.st-l.x{margin-left:24px}
.st-l.y{margin-left:19px}

/* status */
.status{height:20px;flex:none;display:flex;border-bottom:2px solid #c9dbe9;background:#f3f3f1}
.st-cell{width:320px;flex:none;background:#eeefef;display:flex;align-items:center;margin-left:3px;font-size:10px}
.st-dash{margin-left:40px}
.st-msg{margin-left:40px;color:#444}
.st-prog{flex:1;padding:2px 12px 3px 5px}
.st-prog i{display:block;height:100%;background:#f1f1f1;border-top:1px solid #555;border-left:1px solid #555;border-right:1px solid #ddd;border-bottom:1px solid #ccc}
```
FILE: charts.js
```js
(function(){
  function rng(seed){return function(){seed|=0;seed=seed+0x6D2B79F5|0;var t=Math.imul(seed^seed>>>15,1|seed);t=t+Math.imul(t^t>>>7,61|t)^t;return((t^t>>>14)>>>0)/4294967296;};}
  function gauss(r){return (r()+r()+r()+r()-2)*1.22;}

  /* score scatter */
  var sc=document.getElementById('scatter'),r=rng(11),out='';
  function dot(x,y,s,c){out+='<rect x="'+(x-s/2).toFixed(1)+'" y="'+(y-s/2).toFixed(1)+'" width="'+s+'" height="'+s+'" fill="'+c+'"/>';}
  var zoomPts=[[342,100],[372,125],[408,132],[445,143],[380,155],[388,155],[417,162],[398,175],[425,175],[402,188],[480,175],[525,183],[585,195],[660,181],[1035,87],[1070,107],[1050,155],[915,137],[942,141],[888,180],[870,185],[928,186],[920,205],[858,209],[810,200],[808,215],[838,228],[825,222],[895,228],[788,216],[768,210],[798,218],[765,232],[745,240],[708,242],[790,253],[740,277],[752,275],[766,290],[790,295],[762,318],[716,320],[712,348],[750,356],[1043,281],[698,272],[676,248],[660,258],[640,262],[436,352],[618,447],[477,455],[487,436],[510,478],[515,525],[520,520],[610,235],[575,208],[520,208],[535,215],[545,218],[460,200],[472,205],[490,212],[425,205],[445,218],[440,250],[445,262],[430,235],[610,265],[625,282],[640,322],[650,320],[665,280],[670,295],[630,300]];
  zoomPts.forEach(function(p){dot(p[0]/3,260+p[1]/3,1.8,'#000');});
  var i,t,x,y;
  for(i=0;i<240;i++){t=r();x=149+t*30+gauss(r)*(4+t*7);y=343+t*28+gauss(r)*(3+t*7);dot(x,y,1.8,'#000');}
  for(i=0;i<240;i++){dot(177+gauss(r)*8,368+gauss(r)*12,1.8,'#000');}
  for(i=0;i<90;i++){dot(188+gauss(r)*19,352+gauss(r)*13,1.8,'#000');}
  for(i=0;i<190;i++){t=r();t=t*t;y=385+t*130;x=182+gauss(r)*(5-t*2)+(t>.5?2:0);dot(x,y,1.8,'#000');}
  dot(188,564,2,'#000');dot(181,516,2,'#000');dot(185,522,2,'#000');
  for(i=157;i<168;i++)dot(i,360,1.8,'#000');
  [[166,347],[170,357],[175,360],[180,352],[179,360],[172,368],[178,365],[181,368],[178,372],[180,375],[178,380],[180,378],[175,385],[183,386],[190,380],[194,389],[184,392],[183,397],[182,400],[179,377],[182,371]].forEach(function(p){dot(p[0],p[1],3.6,'#c8161c');});
  out+='<path d="M186 395.500H202M193 392V399" stroke="#333"/><path d="M192 400v14l3-3 3 5 2-1-3-5h4z" fill="#fff" stroke="#777" stroke-width=".7"/>';
  sc.innerHTML=out;

  /* spectrum */
  var env=[[870,465],[871,340],[873,270],[875,240],[877,224],[879,270],[881,300],[883,340],[885,370],[887,400],[888,427],[891,455],[895,487],[900,520],[905,550],[910,545],[913,558],[917,483],[923,477],[933,503],[942,500],[950,527],[958,560],[963,533],[967,480],[973,533],[978,550],[982,500],[985,450],[990,420],[992,390],[998,360],[1005,345],[1013,355],[1020,345],[1025,365],[1027,410],[1032,443],[1037,500],[1045,527],[1053,553],[1063,560],[1070,517],[1077,540],[1083,507],[1093,500],[1100,543],[1105,483],[1108,433],[1115,467],[1122,450],[1127,467],[1133,497],[1140,497],[1150,523],[1158,533],[1167,527],[1175,490],[1180,510],[1190,540],[1197,540],[1205,510],[1212,533],[1215,443],[1218,442]];
  function envAt(px){for(var k=1;k<env.length;k++){if(px<=env[k][0]){var a=env[k-1],b=env[k];return a[1]+(b[1]-a[1])*(px-a[0])/(b[0]-a[0]);}}return env[env.length-1][1];}
  function amp(px){return px<886?4:px<1030?38:px<1040?22:50;}
  function path(seed,f,step){var q=rng(seed),d='',first=true,sg=1;for(var px=870;px<=1218;px+=step){sg=-sg;var u=q();var v=envAt(px)+sg*(.12+u*u)*amp(px)*f;d+=(first?'M':'L')+px.toFixed(1)+' '+v.toFixed(1);first=false;}return d;}
  function segs(seed,f){var q=rng(seed),d='';for(var px=880;px<=1215;px+=1.5+q()*5){var v=envAt(px)+(q()-.5)*2*amp(px)*f;d+='M'+px.toFixed(1)+' '+v.toFixed(1)+'v'+(4+q()*14).toFixed(1);}return d;}
  document.getElementById('spectrum').innerHTML=
    '<path d="'+path(3,1,3.4)+'" fill="none" stroke="#bcbcce" stroke-width="1.5"/>'+
    '<path d="'+path(7,1,2.1)+'" fill="none" stroke="#6e6e90" stroke-width=".8"/>'+
    '<path d="'+segs(9,.8)+'" fill="none" stroke="#00004e" stroke-width="1.1"/>'+
    '<path d="M1108 395V440M1073 470V420" fill="none" stroke="#9a9aae"/>';

  /* PCA score image */
  var cv=document.getElementById('pcimg'),ctx=cv.getContext('2d'),W=137,H=137;
  var f=new Float32Array(W*H),q=rng(5);
  for(i=0;i<f.length;i++)f[i]=9+q()*20;
  function blob(bx,by,br,ba){var cx=bx/2,cy=by/2,s=br/2*.68,R=Math.ceil(s*3.2);for(var yy=Math.max(0,Math.floor(cy-R));yy<Math.min(H,cy+R);yy++)for(var xx=Math.max(0,Math.floor(cx-R));xx<Math.min(W,cx+R);xx++){var d2=(xx-cx)*(xx-cx)+(yy-cy)*(yy-cy);f[yy*W+xx]+=ba*Math.exp(-d2/(2*s*s));}}
  var bright=[[24,36,4.5],[28,44,5],[71,41,5],[142,8,4],[201,32,3.5],[250,21,2.5],[143,45,2.5],[48,61,3],[53,74,5.5],[106,64,3],[134,73,4.5],[139,73,4.5],[177,54,3],[199,63,3.5],[90,84,4.5],[96,90,4.5],[40,93,3.5],[5,102,3.5],[24,108,4],[32,114,4.5],[7,117,3.5],[62,119,4],[68,115,3.5],[144,93,3.5],[133,99,2],[194,101,5],[228,111,3.5],[248,108,4],[220,76,3.5],[212,83,3],[146,127,4.5],[38,142,4],[67,153,5],[116,162,6],[112,158,4],[197,161,4],[223,162,6],[165,173,6],[9,175,5],[89,193,5],[108,196,3.5],[174,202,5],[235,203,4.5],[9,202,4],[59,213,6],[191,193,3],[184,137,2.5],[142,152,2.5],[80,170,2],[248,168,2.5],[137,188,2],[114,226,5],[171,227,6],[95,233,3],[139,244,5],[210,250,4],[249,248,5.5],[27,262,4],[32,255,2],[76,263,2],[268,263,2],[231,264,2],[5,224,3],[33,225,3],[93,255,1.5]];
  var medium=[[103,24,4.5],[160,22,5],[190,20,5],[93,39,3.5],[113,39,3.5],[130,28,3],[80,69,3.5],[167,82,3.5],[93,125,5],[30,10,3.5],[42,15,3],[62,5,3],[230,8,3],[270,27,2.5],[185,261,4],[230,231,3],[48,240,3],[14,242,3.5],[205,8,3],[176,8,3],[140,165,2.5],[96,180,3],[150,110,2.5],[65,100,3],[84,103,2.5],[181,150,2.5],[205,150,2.5],[262,135,2.5],[215,130,3],[162,145,2.5],[30,165,3],[20,85,3],[40,75,4],[120,72,2.5],[155,200,3],[200,210,3],[60,255,2.5],[125,258,3],[150,255,3],[252,225,3]];
  bright.forEach(function(b){blob(b[0],b[1],b[2],400);});
  medium.forEach(function(b){blob(b[0],b[1],b[2],130);});
  for(i=0;i<300;i++)blob(q()*274,q()*274,1.8+q()*2.4,16+q()*38);
  var off=document.createElement('canvas');off.width=W;off.height=H;
  var oc=off.getContext('2d'),im=oc.createImageData(W,H);
  for(i=0;i<f.length;i++){var v=Math.min(255,f[i]);im.data[i*4]=im.data[i*4+1]=im.data[i*4+2]=v;im.data[i*4+3]=255;}
  oc.putImageData(im,0,0);
  ctx.imageSmoothingEnabled=true;ctx.imageSmoothingQuality='high';
  ctx.drawImage(off,0,0,274,274);
  /* red selection */
  ctx.fillStyle='#e0101a';ctx.beginPath();ctx.arc(107,155,7,0,7);ctx.fill();
  ctx.save();ctx.beginPath();ctx.arc(107,155,7,0,7);ctx.clip();ctx.strokeStyle='rgba(110,0,0,.55)';ctx.lineWidth=.6;ctx.beginPath();
  for(i=100;i<115;i+=2.4){ctx.moveTo(i,148);ctx.lineTo(i,162);}
  for(i=148;i<163;i+=2.4){ctx.moveTo(100,i);ctx.lineTo(114,i);}ctx.stroke();ctx.restore();
  /* mask outline */
  ctx.strokeStyle='#d000cc';ctx.lineWidth=1.5;ctx.setLineDash([6,3]);
  ctx.strokeRect(.75,.75,272.5,272.5);ctx.setLineDash([]);
  ctx.fillStyle='#ee00ee';ctx.fillRect(0,0,51,3);ctx.fillRect(143,271,62,3);ctx.fillRect(205,267,69,7);
  /* cursor */
  ctx.strokeStyle='#fff';ctx.lineWidth=1;ctx.setLineDash([2,1]);ctx.beginPath();ctx.moveTo(210,219);ctx.lineTo(228,219);ctx.moveTo(219,212);ctx.lineTo(219,226);ctx.stroke();ctx.setLineDash([]);ctx.fillStyle='#111';ctx.fillRect(217,217,4,4);
})();
```
